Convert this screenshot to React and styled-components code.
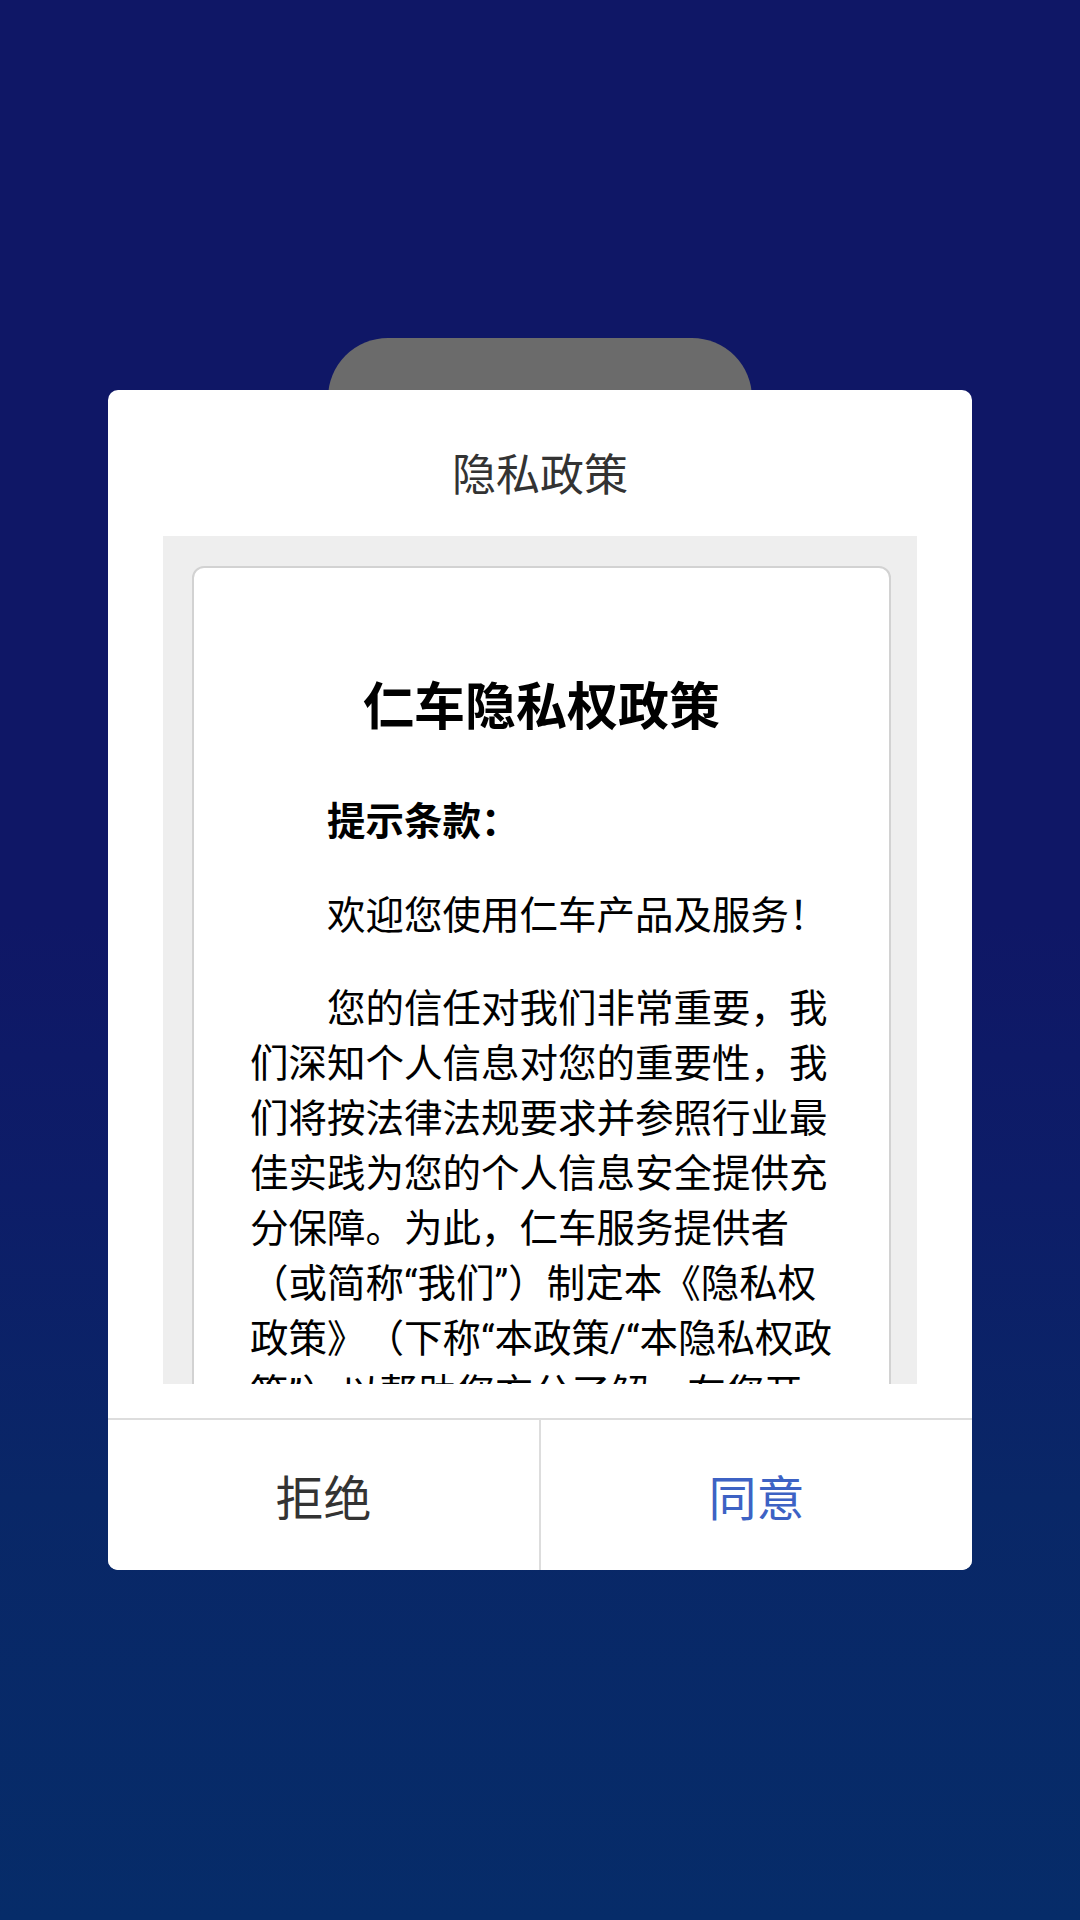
import React from 'react'
import styled, { createGlobalStyle } from 'styled-components'

const GlobalStyle = createGlobalStyle`
  html, body {
    margin: 0;
    padding: 0;
  }
  body {
    font-family: Roboto, "Noto Sans CJK SC", sans-serif;
  }
`

const Screen = styled.div`
  position: relative;
  width: 1080px;
  height: 1920px;
  overflow: hidden;
  background: linear-gradient(
    180deg,
    #0f1766 0%,
    #0f1766 48%,
    #0d1d68 62%,
    #092767 78%,
    #062c69 100%
  );
`

const BackPage = styled.div`
  display: flex;
  justify-content: center;
  padding-top: 338px;
`

const BackButton = styled.div`
  width: 424px;
  height: 120px;
  border-radius: 60px;
  background: #6b6b6b;
`

const Overlay = styled.div`
  position: absolute;
  inset: 0;
  padding-top: 390px;
`

const Dialog = styled.div`
  width: 864px;
  margin: 0 auto;
  background: #fff;
  border-radius: 10px;
  overflow: hidden;
`

const DialogTitle = styled.div`
  padding: 58px 0 32px;
  font-size: 44px;
  line-height: 56px;
  color: #333;
  text-align: center;
`

const ScrollArea = styled.div`
  height: 848px;
  margin: 0 55px 34px;
  padding: 30px 26px 0 29px;
  box-sizing: border-box;
  background: #eeeeee;
  overflow: hidden;
`

const Paper = styled.div`
  background: #fff;
  border: 2px solid #d2d2d2;
  border-radius: 12px;
  padding: 104px 56px 60px;
`

const DocTitle = styled.h1`
  margin: 0 0 50px;
  font-size: 51px;
  line-height: 72px;
  font-weight: 700;
  color: #000;
  text-align: center;
`

const Para = styled.p`
  margin: 0 0 38.5px;
  font-size: 38.5px;
  line-height: 55px;
  text-indent: 2em;
  text-spacing-trim: space-all;
  color: #000;
  font-weight: ${(p) => (p.$bold ? 700 : 400)};
`

const Actions = styled.div`
  display: flex;
  border-top: 2px solid #dddddd;
`

const ActionButton = styled.button`
  flex: 1;
  height: 150px;
  border: none;
  background: #fff;
  font-family: inherit;
  font-size: 48px;
  color: ${(p) => (p.$primary ? '#3d62c4' : '#333')};
  & + & {
    border-left: 2px solid #dddddd;
  }
`

export default function App() {
  return (
    <Screen lang="zh-CN">
      <GlobalStyle />
      <BackPage>
        <BackButton />
      </BackPage>
      <Overlay>
        <Dialog>
          <DialogTitle>隐私政策</DialogTitle>
          <ScrollArea>
            <Paper>
              <DocTitle>仁车隐私权政策</DocTitle>
              <Para $bold>提示条款：</Para>
              <Para>欢迎您使用仁车产品及服务！</Para>
              <Para>
                您的信任对我们非常重要，我们深知个人信息对您的重要性，我们将按法律法规要求并参照行业最佳实践为您的个人信息安全提供充分保障。为此，仁车服务提供者（或简称“我们”）制定本《隐私权政策》（下称“本政策/“本隐私权政策”）以帮助您充分了解，在您开始使用我们的产品和服务前，请您务必先仔细阅读和理解本政策，确保您充分理解和同意之后再开始使用。
              </Para>
            </Paper>
          </ScrollArea>
          <Actions>
            <ActionButton>拒绝</ActionButton>
            <ActionButton $primary>同意</ActionButton>
          </Actions>
        </Dialog>
      </Overlay>
    </Screen>
  )
}
